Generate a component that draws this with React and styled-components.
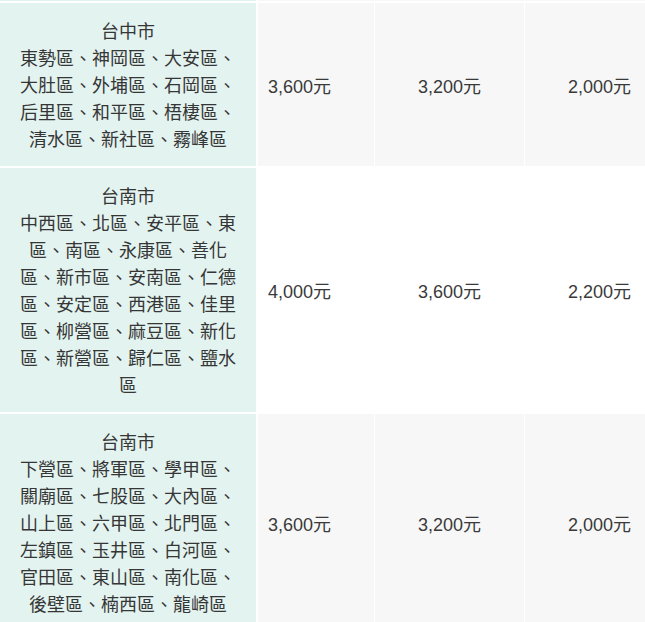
import React from "react";
import styled, { createGlobalStyle } from "styled-components";

const Global = createGlobalStyle`
  html, body { margin: 0; padding: 0; background: #ffffff; }
  body { font-family: "Liberation Sans", "Noto Sans CJK TC", sans-serif; }
`;

const Table = styled.div`
  width: 645px;
  overflow: hidden;
  display: grid;
  grid-template-columns: 258px 117px 150px 150px;
  background: #ffffff;
`;

const AreaCell = styled.div`
  background: #e3f3f0;
  border-right: 2px solid #ffffff;
  border-bottom: 2px solid #ffffff;
  padding: ${(p) => (p.$stub ? "0" : "14px 16px")};
  height: ${(p) => (p.$stub ? "1px" : "auto")};
  text-align: center;
  font-family: "Noto Sans CJK TC", "Liberation Sans", sans-serif;
  font-size: 18px;
  line-height: 27px;
  color: #363636;
  word-break: break-all;
`;

const PriceCell = styled.div`
  background: ${(p) => (p.$striped ? "#f7f7f7" : "#ffffff")};
  border-right: 1px solid #ffffff;
  border-bottom: 2px solid #ffffff;
  display: flex;
  align-items: center;
  justify-content: ${(p) => (p.$first ? "flex-start" : "center")};
  padding-left: ${(p) => (p.$first ? "10px" : "0")};
  height: ${(p) => (p.$stub ? "1px" : "auto")};
  font-family: "Liberation Sans", "Noto Sans CJK TC", sans-serif;
  font-size: 18px;
  color: #3a3a3a;
`;

const rows = [
  {
    city: "台中市",
    areas: "東勢區、神岡區、大安區、大肚區、外埔區、石岡區、后里區、和平區、梧棲區、清水區、新社區、霧峰區",
    prices: ["3,600元", "3,200元", "2,000元"],
  },
  {
    city: "台南市",
    areas: "中西區、北區、安平區、東區、南區、永康區、善化區、新市區、安南區、仁德區、安定區、西港區、佳里區、柳營區、麻豆區、新化區、新營區、歸仁區、鹽水區",
    prices: ["4,000元", "3,600元", "2,200元"],
  },
  {
    city: "台南市",
    areas: "下營區、將軍區、學甲區、關廟區、七股區、大內區、山上區、六甲區、北門區、左鎮區、玉井區、白河區、官田區、東山區、南化區、後壁區、楠西區、龍崎區",
    prices: ["3,600元", "3,200元", "2,000元"],
  },
];

export default function App() {
  return (
    <>
      <Global />
      <Table>
        <AreaCell $stub />
        <PriceCell $stub $first $striped />
        <PriceCell $stub $striped />
        <PriceCell $stub $striped />
        {rows.map((r, i) => (
          <React.Fragment key={i}>
            <AreaCell>
              {r.city}
              <br />
              {r.areas}
            </AreaCell>
            {r.prices.map((p, j) => (
              <PriceCell key={j} $first={j === 0} $striped={i % 2 === 0}>
                {p}
              </PriceCell>
            ))}
          </React.Fragment>
        ))}
      </Table>
    </>
  );
}
